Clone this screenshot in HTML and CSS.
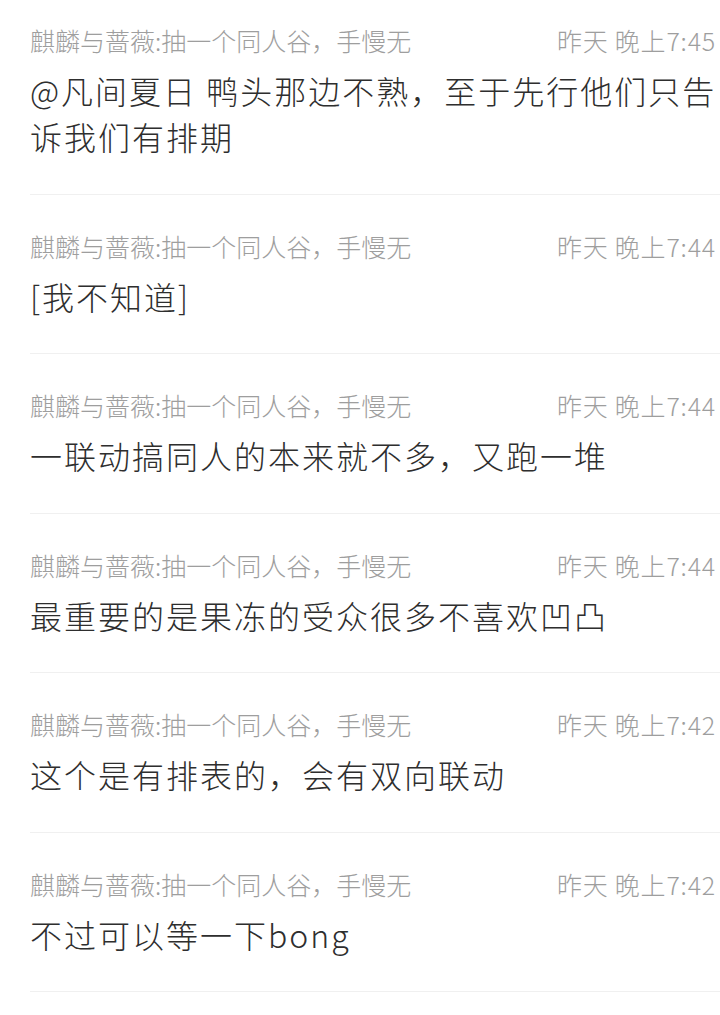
FILE: index.html
```html
<!DOCTYPE html>
<html lang="zh-CN">
<head>
    <meta charset="UTF-8">
    <meta name="viewport" content="width=device-width, initial-scale=1.0">
    <title>评论</title>
    <link rel="stylesheet" href="styles.css">
</head>
<body>
    <div class="list">
        <div class="item">
            <div class="meta">
                <span class="author">麒麟与蔷薇:抽一个同人谷，手慢无</span>
                <span class="time">昨天 晚上7:45</span>
            </div>
            <div class="text">@凡间夏日 鸭头那边不熟，至于先行他们只告诉我们有排期</div>
        </div>

        <div class="item">
            <div class="meta">
                <span class="author">麒麟与蔷薇:抽一个同人谷，手慢无</span>
                <span class="time">昨天 晚上7:44</span>
            </div>
            <div class="text">[我不知道]</div>
        </div>

        <div class="item">
            <div class="meta">
                <span class="author">麒麟与蔷薇:抽一个同人谷，手慢无</span>
                <span class="time">昨天 晚上7:44</span>
            </div>
            <div class="text">一联动搞同人的本来就不多，又跑一堆</div>
        </div>

        <div class="item">
            <div class="meta">
                <span class="author">麒麟与蔷薇:抽一个同人谷，手慢无</span>
                <span class="time">昨天 晚上7:44</span>
            </div>
            <div class="text">最重要的是果冻的受众很多不喜欢凹凸</div>
        </div>

        <div class="item">
            <div class="meta">
                <span class="author">麒麟与蔷薇:抽一个同人谷，手慢无</span>
                <span class="time">昨天 晚上7:42</span>
            </div>
            <div class="text">这个是有排表的，会有双向联动</div>
        </div>

        <div class="item">
            <div class="meta">
                <span class="author">麒麟与蔷薇:抽一个同人谷，手慢无</span>
                <span class="time">昨天 晚上7:42</span>
            </div>
            <div class="text">不过可以等一下bong</div>
        </div>
    </div>
</body>
</html>
```

FILE: styles.css
```css
body {
    margin: 0;
    background-color: #fff;
    font-family: "Noto Sans CJK SC", "Noto Sans", sans-serif;
}
.list {
    margin-top: -11px;
    padding-left: 30px;
}
.item {
    padding: 36px 0 34.5px 0;
    border-bottom: 1px solid #f0f0f0;
}
.meta {
    display: flex;
    justify-content: space-between;
    align-items: center;
    padding-right: 4px;
    font-size: 25px;
    line-height: 30px;
    color: #9e9e9e;
    font-weight: 300;
}
.time {
    letter-spacing: 0.8px;
}
.text {
    margin-top: 12px;
    font-size: 32px;
    line-height: 46px;
    letter-spacing: 2px;
    color: #2e2e2e;
    font-weight: 300;
}
```
